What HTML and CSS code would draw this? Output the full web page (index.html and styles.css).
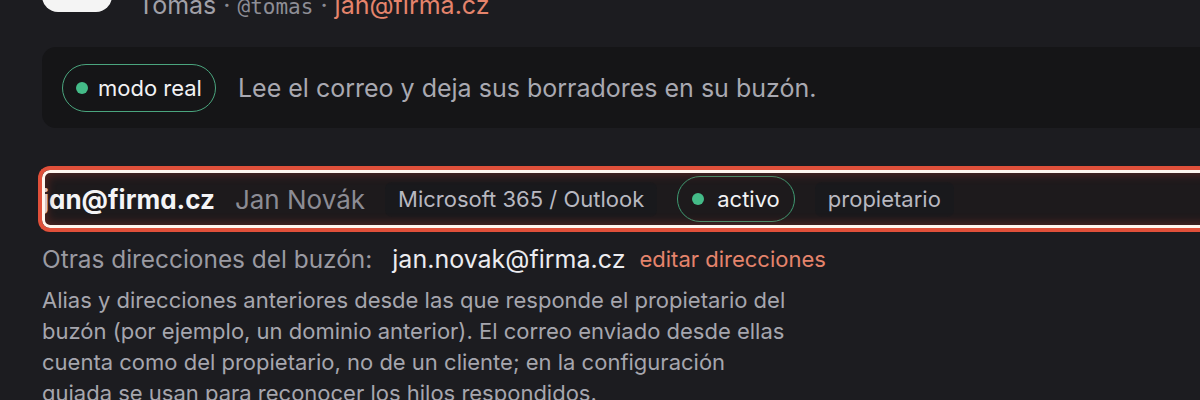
FILE: index.html
```html
<!DOCTYPE html>
<html lang="es">
<head>
<meta charset="utf-8">
<link rel="stylesheet" href="styles.css">
</head>
<body>
<main class="page">
  <header class="who">
    <div class="avatar"></div>
    <div class="who-text">
      <div class="who-line"><span class="who-name">Tomas</span><span class="sep">·</span><span class="handle">@tomas</span><span class="sep">·</span><span class="who-mail">jan@firma.cz</span></div>
    </div>
  </header>

  <section class="mode-card">
    <span class="pill"><span class="dot"></span>modo real</span>
    <span class="mode-text">Lee el correo y deja sus borradores en su buzón.</span>
  </section>

  <section class="mailbox">
    <span class="mb-addr">jan@firma.cz</span>
    <span class="mb-name">Jan Novák</span>
    <span class="chip">Microsoft 365 / Outlook</span>
    <span class="pill pill-sm"><span class="dot"></span>activo</span>
    <span class="chip">propietario</span>
  </section>

  <div class="aliases">
    <span class="al-label">Otras direcciones del buzón:</span>
    <span class="al-value">jan.novak@firma.cz</span>
    <a class="al-edit">editar direcciones</a>
  </div>

  <p class="help">Alias y direcciones anteriores desde las que responde el propietario del buzón (por ejemplo, un dominio anterior). El correo enviado desde ellas cuenta como del propietario, no de un cliente; en la configuración guiada se usan para reconocer los hilos respondidos.</p>
</main>
</body>
</html>
```

FILE: styles.css
```css
html, body {
  margin: 0;
  background: #1c1c20;
  overflow: hidden;
}
body {
  font-family: "Inter", "Liberation Sans", sans-serif;
  color: #a8a8b0;
}
.page {
  width: 1320px;
  padding-left: 42px;
}

.who {
  display: flex;
  gap: 26px;
  margin-top: -60px;
  height: 72px;
}
.avatar {
  width: 70px;
  height: 72px;
  border-radius: 16px;
  background: #f4f4f4;
  flex: none;
}
.who-text {
  padding-top: 50px;
}
.who-line {
  font-size: 25px;
  line-height: 30px;
  white-space: nowrap;
}
.who-name { color: #a0a0a8; }
.sep { color: #8a8a92; margin: 0 7px; }
.handle {
  font-family: "DejaVu Sans Mono", monospace;
  font-size: 21px;
  color: #8e8e96;
}
.who-mail { color: #e5846c; }

.mode-card {
  margin-top: 35px;
  height: 81px;
  box-sizing: border-box;
  padding: 0 20px;
  display: flex;
  align-items: center;
  gap: 22px;
  background: #151517;
  border-radius: 14px 0 0 14px;
}
.pill {
  display: inline-flex;
  align-items: center;
  gap: 10px;
  height: 48px;
  box-sizing: border-box;
  padding: 0 13px 0 13px;
  border: 1.5px solid #4aa57e;
  border-radius: 999px;
  font-size: 22px;
  color: #f2f2f4;
  white-space: nowrap;
}
.dot {
  width: 12px;
  height: 12px;
  border-radius: 50%;
  background: #44bb88;
  flex: none;
}
.mode-text {
  font-size: 25px;
  color: #a9a9b1;
  white-space: nowrap;
}

.mailbox {
  position: relative;
  margin-top: 38px;
  margin-left: -4px;
  padding-left: 4px;
  height: 66px;
  box-sizing: border-box;
  display: flex;
  align-items: center;
  gap: 20px;
  background: #1d1a1c;
  border-radius: 12px 0 0 12px;
  white-space: nowrap;
}
.mailbox::after {
  content: "";
  position: absolute;
  inset: 0;
  border: 4px solid #e0503a;
  border-right: none;
  border-radius: 12px 0 0 12px;
  box-shadow: inset 0 0 0 3px #fff6ef, inset 0 0 10px 5px rgba(150, 50, 40, 0.45);
  pointer-events: none;
}
.mb-addr {
  font-size: 26px;
  font-weight: 700;
  color: #f4f4f6;
  font-feature-settings: "cv11" 1;
}
.mb-name {
  font-size: 26px;
  color: #8c8c94;
}
.chip {
  display: inline-flex;
  align-items: center;
  height: 35px;
  padding: 0 13px;
  border-radius: 7px;
  background: #19191c;
  font-size: 22px;
  color: #b8b8c0;
}
.pill-sm {
  height: 46px;
  padding: 0 14px 0 14px;
  gap: 13px;
  border-color: #3f9a72;
}

.aliases {
  margin-top: 12px;
  height: 30px;
  display: flex;
  align-items: center;
  white-space: nowrap;
}
.al-label {
  font-size: 24.4px;
  color: #9a9aa2;
}
.al-value {
  font-size: 25px;
  color: #ececf0;
  margin-left: 20px;
}
.al-edit {
  font-size: 22px;
  color: #e5846c;
  margin-left: 14px;
}

.help {
  margin: 11px 0 0;
  width: 750px;
  font-size: 22px;
  line-height: 31px;
  color: #a6a6ae;
}
```
